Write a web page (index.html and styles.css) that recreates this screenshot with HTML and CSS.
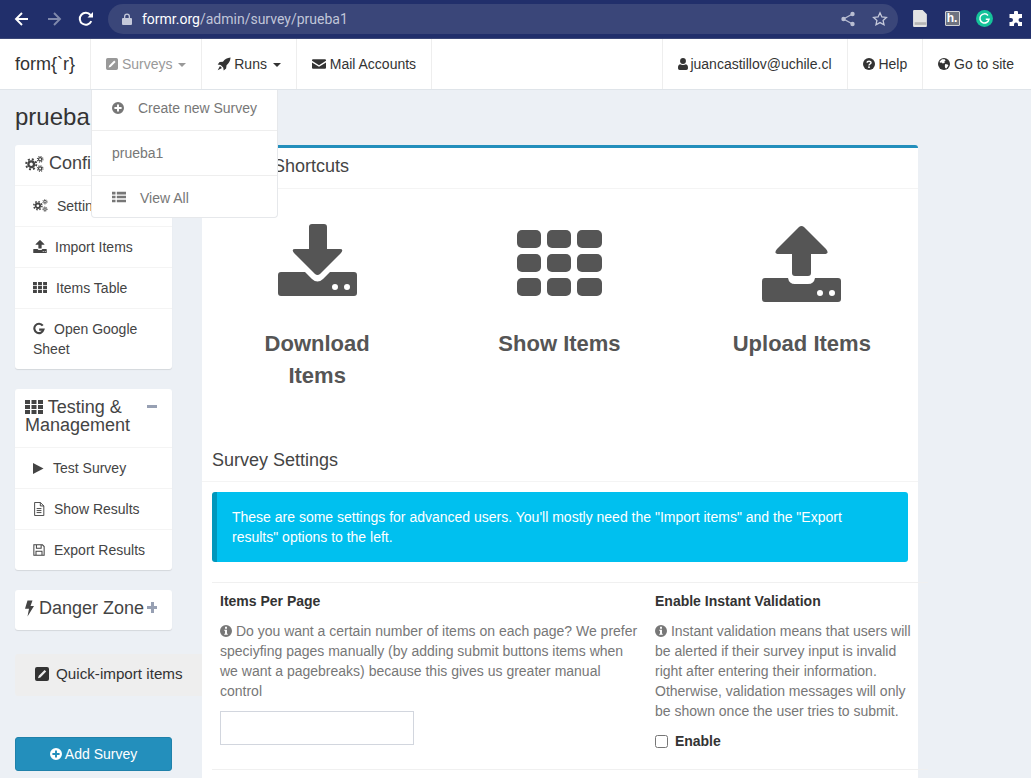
FILE: index.html
```html
<!DOCTYPE html>
<html lang="en">
<head>
<meta charset="utf-8">
<title>formr admin</title>
<link rel="stylesheet" href="styles.css">
</head>
<body>
<svg class="sprite" aria-hidden="true">
  <defs>
    <symbol id="i-edit" viewBox="1 1 14 14"><path fill-rule="evenodd" d="M3 1h10a2 2 0 0 1 2 2v10a2 2 0 0 1-2 2H3a2 2 0 0 1-2-2V3a2 2 0 0 1 2-2zM10.600 4 4.800 9.800 4 12.200l2.400-.8L12.200 5.600z"/></symbol>
    <symbol id="i-rocket" viewBox="0 0 16 16"><path d="M15.500.5C11.500.7 8.800 2.700 6.800 5.300L3 5.800.8 8.500l3.400.6 2.900 2.900.6 3.400 2.700-2.200.5-3.800C13.300 7.200 15.300 4.500 15.500.5zM3.400 10.300.8 15.200l4.900-2.600z"/></symbol>
    <symbol id="i-mail" viewBox="0 0 16 16"><path d="M1.200 2.500h13.600A1.200 1.200 0 0 1 16 3.700v.6L8 9.300 0 4.300v-.6a1.200 1.200 0 0 1 1.200-1.200zM0 6.200l8 5 8-5v6.100a1.200 1.200 0 0 1-1.200 1.200H1.200A1.200 1.200 0 0 1 0 12.300z"/></symbol>
    <symbol id="i-user" viewBox="0.500 0.400 13 15.100" preserveAspectRatio="none"><circle cx="7" cy="4.200" r="3.800"/><path d="M3.200 8.300C5 9.600 9 9.600 10.800 8.300 12.800 8.600 13.500 10.500 13.500 13c0 1.500-.8 2.500-2.200 2.500H2.700C1.300 15.500.5 14.500.5 13c0-2.500.7-4.400 2.700-4.700z"/></symbol>
    <symbol id="i-help" viewBox="0.500 0.500 15 15"><circle cx="8" cy="8" r="7.500"/><path d="M5.500 6.200C5.700 4 10.500 3.800 10.500 6.300 10.500 8 8 8 8 9.800" fill="none" stroke="#fff" stroke-width="1.800"/><rect x="7" y="11" width="2" height="2" fill="#fff"/></symbol>
    <symbol id="i-globe" viewBox="0.500 0.500 15 15"><circle cx="8" cy="8" r="7.500"/><path d="M5.500 2.200 8.800 2 10 3.500 8.500 5 9 6.500 6.500 7.500 5 6 3 6.500 2.500 5zM9.500 8l3 .5 1 1.500-2.500 3.500-1.500-.5-.5-2.500z" fill="#fff"/></symbol>
    <symbol id="i-plus-circle" viewBox="0.500 0.500 15 15"><path fill-rule="evenodd" d="M8 .5a7.500 7.500 0 1 0 0 15A7.500 7.500 0 0 0 8 .5zM6.800 3.500h2.400v3.300h3.300v2.400H9.200v3.300H6.800V9.200H3.500V6.800h3.300z"/></symbol>
    <symbol id="i-info" viewBox="0.500 0.500 15 15"><path fill-rule="evenodd" d="M8 .5a7.500 7.500 0 1 0 0 15A7.500 7.500 0 0 0 8 .5zM6.800 2.800h2.400v2.300H6.800zM5.800 6.300h3.400v5h1v1.500H5.800v-1.500h1V7.800h-1z"/></symbol>
    <symbol id="i-list" viewBox="0 0 16 14"><path d="M0 1h4v3H0zM5.500 1H16v3H5.500zM0 5.500h4v3H0zM5.500 5.500H16v3H5.500zM0 10h4v3H0zM5.500 10H16v3H5.500z"/></symbol>
    <symbol id="i-th" viewBox="0 0 18 14"><path d="M0 0h5v4H0zM6.500 0h5v4h-5zM13 0h5v4h-5zM0 5h5v4H0zM6.500 5h5v4h-5zM13 5h5v4h-5zM0 10h5v4H0zM6.500 10h5v4h-5zM13 10h5v4h-5z"/></symbol>
    <symbol id="i-cogs" viewBox="0 0 20 17">
      <g fill="none" stroke="currentColor">
        <circle cx="6.500" cy="8.800" r="3" stroke-width="2.400"/>
        <circle cx="6.500" cy="8.800" r="5.400" stroke-width="2" stroke-dasharray="2.100 2.140"/>
        <circle cx="16" cy="3.500" r="1.700" stroke-width="1.300"/>
        <circle cx="16" cy="3.500" r="3" stroke-width="1.100" stroke-dasharray="1.200 1.160"/>
        <circle cx="16" cy="13.300" r="1.700" stroke-width="1.300"/>
        <circle cx="16" cy="13.300" r="3" stroke-width="1.100" stroke-dasharray="1.200 1.160"/>
      </g>
    </symbol>
    <symbol id="i-g" viewBox="0 0 16 16"><path d="M13 3.600A6.200 6.200 0 1 0 14 8.800H8.200" fill="none" stroke="currentColor" stroke-width="2.800"/></symbol>
    <symbol id="i-play" viewBox="0 0 12 14"><path d="M0 1v12l11.500-6z"/></symbol>
    <symbol id="i-file" viewBox="0 0 13 16"><path d="M1.500.5h6.500l4 4v11h-10.500z M8 .5v4h4M3.800 7.500h5.500M3.800 9.800h5.500M3.800 12.100h5.500" fill="none" stroke="currentColor" stroke-width="1.100"/></symbol>
    <symbol id="i-save" viewBox="0 0 14 14"><path d="M1 1h10l2 2v10H1zM4 1v4h5.500V1M3.500 13V8.500h7V13" fill="none" stroke="currentColor" stroke-width="1.200"/></symbol>
    <symbol id="i-bolt" viewBox="0 0 9 16"><path d="M2.500 0h5L5.500 5.500H9L2.500 16l1.500-7.800H0z"/></symbol>
    <symbol id="i-upload" viewBox="0 0 79 76"><path fill-rule="evenodd" d="M37 1Q39.500-1 42 1L64 23Q68 28 62 28H49V47Q49 50 46 50H33Q30 50 30 47V28H17Q11 28 15 23zM3 52H26Q27 58 33 58H46Q52 58 53 52H76Q79 52 79 55V73Q79 76 76 76H3Q0 76 0 73V55Q0 52 3 52zM58 64a3 3 0 1 0 0 6 3 3 0 0 0 0-6zM70 64a3 3 0 1 0 0 6 3 3 0 0 0 0-6z"/></symbol>
    <symbol id="i-download" viewBox="0 0 79 72"><path fill-rule="evenodd" d="M34 0H46Q49 0 49 3V25H62Q66 25 63 29L42 50Q39.500 52 37 50L16 29Q13 25 17 25H31V3Q31 0 34 0zM3 48H27L34 55Q39.500 60 45 55L52 48H76Q79 48 79 51V69Q79 72 76 72H3Q0 72 0 69V51Q0 48 3 48zM57 60a3 3 0 1 0 0 6 3 3 0 0 0 0-6zM69 60a3 3 0 1 0 0 6 3 3 0 0 0 0-6z"/></symbol>
  </defs>
</svg>

<header class="browser">
  <span class="tool"><svg class="chrome-ico" viewBox="0 0 16 16"><path d="M14 8H2.500M8 2 2 8l6 6" fill="none" stroke="#fff" stroke-width="1.900"/></svg></span>
  <span class="tool"><svg class="chrome-ico" viewBox="0 0 16 16"><path d="M2 8h11.500M8 2l6 6-6 6" fill="none" stroke="#8089ac" stroke-width="1.900"/></svg></span>
  <span class="tool"><svg class="chrome-ico" viewBox="0 0 16 16"><path d="M13.300 10.200A6 6 0 1 1 12.500 4" fill="none" stroke="#fff" stroke-width="2"/><path d="M9.500 6.500H15V1z" fill="#fff"/></svg></span>
  <div class="omnibox">
    <svg class="lock" viewBox="0 0 10 12"><path d="M1 5h1V3.500a3 3 0 0 1 6 0V5h1a1 1 0 0 1 1 1v5a1 1 0 0 1-1 1H1a1 1 0 0 1-1-1V6a1 1 0 0 1 1-1zM3.300 5h3.400V3.500a1.700 1.700 0 0 0-3.400 0z" fill="#c5c9da"/></svg>
    <span class="url"><b class="host">formr.org</b>/admin/survey/prueba1</span>
    <span class="tool"><svg class="chrome-ico" viewBox="0 0 16 16"><path d="M12.500 3 3.500 8l9 5" fill="none" stroke="#b9bed2" stroke-width="1.300"/><circle cx="12.500" cy="3" r="2.200" fill="#b9bed2"/><circle cx="12.500" cy="13" r="2.200" fill="#b9bed2"/><circle cx="3.500" cy="8" r="2.200" fill="#b9bed2"/></svg></span>
    <span class="tool"><svg class="chrome-ico" viewBox="0 0 16 16"><path d="m8 1.800 1.900 4.100 4.500.5-3.300 3 .9 4.400L8 11.600l-4 2.200.9-4.400-3.300-3 4.500-.5z" fill="none" stroke="#c5c9da" stroke-width="1.300"/></svg></span>
  </div>
  <span class="tool"><svg class="chrome-ico ext" viewBox="0 0 14 16"><path d="M1 0h8l4 4v11a1 1 0 0 1-1 1H1a1 1 0 0 1-1-1V1a1 1 0 0 1 1-1z" fill="#e3e3e3"/><path d="M1.500 11.500h11V14h-11z" fill="#b5b5b5"/></svg></span>
  <span class="tool"><span class="ext-h">h.</span></span>
  <span class="tool"><svg class="chrome-ico ext-g" viewBox="0 0 16 16"><circle cx="8" cy="8" r="8" fill="#15c39a"/><path d="M11.300 5.200A4.300 4.300 0 1 0 12.200 8.800H9.200" fill="none" stroke="#fff" stroke-width="1.400"/></svg></span>
  <span class="tool"><svg class="chrome-ico" viewBox="0 0 16 16"><path d="M6 1.500a2 2 0 0 1 4 0V3h4v4h-1.500a2 2 0 0 0 0 4H14v4H10v-1.500a2 2 0 0 0-4 0V15H1.500v-4H3a2 2 0 0 0 0-4H1.500V3H6z" fill="#fff"/></svg></span>
</header>

<nav class="navbar">
  <a class="brand">form{`r}</a>
  <div class="nav-item open">
    <svg class="ico ico-12"><use href="#i-edit"/></svg> Surveys <span class="caret"></span>
    <ul class="dropdown">
      <li class="dd-first"><svg class="ico dd-ico"><use href="#i-plus-circle"/></svg>Create new Survey</li>
      <li class="dd-mid">prueba1</li>
      <li class="dd-last"><svg class="ico dd-ico-list"><use href="#i-list"/></svg>View All</li>
    </ul>
  </div>
  <div class="nav-item"><svg class="ico ico-rocket"><use href="#i-rocket"/></svg> Runs <span class="caret"></span></div>
  <div class="nav-item nav-last"><svg class="ico"><use href="#i-mail"/></svg> Mail Accounts</div>
  <div class="nav-right">
    <div class="nav-item"><svg class="ico ico-user"><use href="#i-user"/></svg> juancastillov@uchile.cl</div>
    <div class="nav-item"><svg class="ico ico-sm"><use href="#i-help"/></svg> Help</div>
    <div class="nav-item"><svg class="ico ico-sm"><use href="#i-globe"/></svg> Go to site</div>
  </div>
</nav>

<div class="page">
  <aside class="sidebar">
    <h1 class="page-title">prueba1</h1>

    <section class="card">
      <h3 class="card-head"><span class="card-title nowrap"><svg class="hico hico-cogs"><use href="#i-cogs"/></svg> Configuration</span></h3>
      <ul class="menu">
        <li><svg class="ico mico-cogs"><use href="#i-cogs"/></svg><span class="gap-10">Settings</span></li>
        <li><svg class="ico mico-14"><use href="#i-upload"/></svg><span class="gap-8">Import Items</span></li>
        <li><svg class="ico mico-14"><use href="#i-th"/></svg><span class="gap-9">Items Table</span></li>
        <li><svg class="ico mico-12"><use href="#i-g"/></svg><span class="gap-9">Open Google Sheet</span></li>
      </ul>
    </section>

    <section class="card">
      <h3 class="card-head"><span class="card-title"><svg class="hico hico-th"><use href="#i-th"/></svg> Testing &amp; Management</span><span class="box-tool minus"></span></h3>
      <ul class="menu">
        <li><svg class="ico mico-11"><use href="#i-play"/></svg><span class="gap-9">Test Survey</span></li>
        <li><svg class="ico mico-12"><use href="#i-file"/></svg><span class="gap-9">Show Results</span></li>
        <li><svg class="ico mico-12"><use href="#i-save"/></svg><span class="gap-9">Export Results</span></li>
      </ul>
    </section>

    <section class="card">
      <h3 class="card-head"><span class="card-title nowrap"><svg class="hico hico-bolt"><use href="#i-bolt"/></svg> Danger Zone</span><span class="box-tool plus"></span></h3>
    </section>

    <div class="quick"><svg class="ico quick-ico"><use href="#i-edit"/></svg>Quick-import items</div>
    <div class="add-btn"><svg class="ico ico-sm"><use href="#i-plus-circle"/></svg> Add Survey</div>
  </aside>

  <main class="main-box">
    <h3 class="section-head">Survey Shortcuts</h3>
    <div class="shortcuts">
      <a class="shortcut">
        <svg class="big-ico" viewBox="-3 0 85 80"><use href="#i-download" width="79" height="72"/></svg>
        <h3>Download Items</h3>
      </a>
      <a class="shortcut">
        <svg class="big-ico" viewBox="0 0 85 80">
          <rect x="0" y="6" width="24" height="18" rx="5"/><rect x="30" y="6" width="24" height="18" rx="5"/><rect x="60" y="6" width="25" height="18" rx="5"/>
          <rect x="0" y="30" width="24" height="18" rx="5"/><rect x="30" y="30" width="24" height="18" rx="5"/><rect x="60" y="30" width="25" height="18" rx="5"/>
          <rect x="0" y="54" width="24" height="18" rx="5"/><rect x="30" y="54" width="24" height="18" rx="5"/><rect x="60" y="54" width="25" height="18" rx="5"/>
        </svg>
        <h3>Show Items</h3>
      </a>
      <a class="shortcut">
        <svg class="big-ico" viewBox="-3 -2 85 80"><use href="#i-upload" width="79" height="76"/></svg>
        <h3>Upload Items</h3>
      </a>
    </div>

    <h3 class="section-head settings-head">Survey Settings</h3>
    <div class="alert">These are some settings for advanced users. You'll mostly need the "Import items" and the "Export results" options to the left.</div>

    <div class="form-row">
      <div class="field">
        <label class="field-label">Items Per Page</label>
        <p class="help"><svg class="ico ico-info"><use href="#i-info"/></svg> Do you want a certain number of items on each page? We prefer speciyfing pages manually (by adding submit buttons items when we want a pagebreaks) because this gives us greater manual control</p>
        <input class="text-input" type="text">
      </div>
      <div class="field field-right">
        <label class="field-label">Enable Instant Validation</label>
        <p class="help"><svg class="ico ico-info"><use href="#i-info"/></svg> Instant validation means that users will be alerted if their survey input is invalid right after entering their information. Otherwise, validation messages will only be shown once the user tries to submit.</p>
        <label class="check"><input type="checkbox"> Enable</label>
      </div>
    </div>
    <div class="form-row form-row-end"></div>
  </main>
</div>
</body>
</html>
```

FILE: styles.css
```css
* { box-sizing: border-box; }
html, body { margin: 0; padding: 0; height: 778px; overflow: hidden; }
body {
  background: #ecf0f5;
  font: 14px/20px "Liberation Sans", Arial, sans-serif;
  color: #333;
}
h1, h3, p, ul { margin: 0; padding: 0; font-weight: normal; }
ul { list-style: none; }
svg { fill: currentColor; }
.sprite { position: absolute; width: 0; height: 0; }

/* browser chrome */
.browser {
  display: flex;
  align-items: center;
  height: 39px;
  padding: 0 0 1px 6px;
  background: #212f6b;
  border-bottom: 1px solid #3b4777;
}
.tool {
  flex: none;
  width: 32px;
  height: 30px;
  display: flex;
  align-items: center;
  justify-content: center;
}
.chrome-ico { width: 16px; height: 16px; display: block; }
.ext { height: 17px; width: 15px; }
.ext-g { width: 17px; height: 17px; }
.ext-h {
  width: 15px;
  height: 15px;
  background: #6e7380;
  border: 1px solid #cfd1d6;
  border-radius: 1px;
  color: #fff;
  font: bold 12px/13px "Liberation Sans", sans-serif;
  text-align: center;
}
.omnibox {
  flex: none;
  width: 790px;
  height: 30px;
  margin: 0 6px;
  padding: 0 2px 0 14px;
  display: flex;
  align-items: center;
  border-radius: 15px;
  background: #3a4679;
  color: #c0c5d8;
}
.lock { width: 10px; height: 12px; flex: none; }
.url {
  flex: 1;
  margin-left: 10px;
  font: 14px/20px "Roboto", "Noto Sans", sans-serif;
}
.host { font-weight: normal; color: #fff; }

/* app navbar */
.navbar {
  display: flex;
  height: 51px;
  background: #fff;
  border-bottom: 1px solid #dfe4e9;
  color: #333;
}
.brand {
  width: 90px;
  padding: 14px 15px;
  font-size: 18px;
  line-height: 22px;
  color: #333;
}
.nav-item {
  position: relative;
  padding: 15px 15px 0;
  height: 50px;
  border-left: 1px solid #eee;
  white-space: nowrap;
}
.nav-last { border-right: 1px solid #eee; }
.nav-item.open { color: #999; }
.nav-right { margin-left: auto; padding-right: 2px; display: flex; }
.ico { width: 14px; height: 14px; display: inline-block; vertical-align: -2px; }
.ico-12 { width: 12px; height: 12px; vertical-align: -1px; }
.ico-rocket { width: 14px; height: 14px; margin-right: -1px; vertical-align: -2px; }
.ico-user { width: 10px; height: 12px; margin-right: -1px; vertical-align: -1px; }
.ico-sm { width: 12px; height: 12px; vertical-align: -1px; }
.caret {
  display: inline-block;
  width: 0;
  height: 0;
  margin-left: 2px;
  vertical-align: middle;
  border-top: 4px solid currentColor;
  border-left: 4px solid transparent;
  border-right: 4px solid transparent;
}
.dropdown {
  position: absolute;
  z-index: 5;
  top: 51px;
  left: 0;
  width: 187px;
  background: #fff;
  border: 1px solid #e6e8eb;
  border-top: 0;
  border-radius: 0 0 4px 4px;
  color: #777;
}
.dropdown li { padding-left: 20px; border-top: 1px solid #eee; }
.dropdown .dd-first { padding-top: 8px; padding-bottom: 12px; border-top: 0; }
.dropdown .dd-mid { padding-top: 12px; padding-bottom: 12px; }
.dropdown .dd-last { padding-top: 12px; padding-bottom: 9px; }
.dd-ico { width: 12px; height: 12px; margin-right: 14px; vertical-align: -1px; }
.dd-ico-list { margin-right: 14px; vertical-align: -1px; }

/* layout */
.page { display: flex; align-items: flex-start; }
.sidebar { flex: none; width: 202px; padding: 0 30px 0 15px; color: #444; }
.page-title {
  margin: 15px 0 16px;
  font-size: 24px;
  line-height: 24px;
  color: #333;
  white-space: nowrap;
}
.card {
  background: #fff;
  border-radius: 3px;
  box-shadow: 0 1px 1px rgba(0, 0, 0, .1);
  margin-bottom: 20px;
}
.card-head {
  display: flex;
  justify-content: space-between;
  align-items: flex-start;
  padding: 9px 15px 13px 10px;
  font-size: 18px;
  line-height: 18px;
  color: #444;
}
.card-title { min-width: 0; width: 118px; }
.nowrap { white-space: nowrap; }
.hico { display: inline-block; vertical-align: top; }
.hico-cogs { width: 19px; height: 16px; margin-top: 2px; }
.hico-th { width: 18px; height: 14px; margin-top: 2px; }
.hico-bolt { width: 9px; height: 17px; margin-top: 1px; }
.box-tool { position: relative; flex: none; width: 10px; height: 18px; }
.minus::before, .plus::before, .plus::after {
  content: "";
  position: absolute;
  background: #97a0b3;
}
.minus::before, .plus::before { left: 0; top: 7px; width: 10px; height: 3px; }
.plus::after { left: 3.500px; top: 3px; width: 3px; height: 11px; }
.menu li { padding: 10px 10px 10px 18px; border-top: 1px solid #f4f4f4; }
.mico-cogs { width: 15px; height: 13px; margin-right: -1px; vertical-align: -1px; }
.mico-14 { width: 14px; height: 13px; vertical-align: -1px; }
.mico-12 { width: 12px; height: 14px; vertical-align: -2px; }
.mico-11 { width: 11px; height: 13px; vertical-align: -2px; }
.gap-8 { margin-left: 8px; }
.gap-9 { margin-left: 9px; }
.gap-10 { margin-left: 10px; }
.quick {
  width: 187px;
  height: 42px;
  margin-top: 24px;
  padding: 10px 0 0 20px;
  background: #eee;
  font-size: 15.200px;
  line-height: 20px;
  color: #333;
  white-space: nowrap;
  border-radius: 3px 0 0 3px;
}
.quick-ico { margin-right: 7px; vertical-align: -2px; }
.add-btn {
  margin-top: 41px;
  height: 34px;
  padding-top: 6px;
  text-align: center;
  background: #238fbc;
  border: 1px solid #1f81aa;
  border-radius: 3px;
  color: #fff;
}

/* main */
.main-box {
  flex: none;
  width: 716px;
  height: 633px;
  margin-top: 55px;
  background: #fff;
  border-top: 3px solid #238fbc;
  border-radius: 3px 3px 0 0;
}
.section-head {
  padding: 8px 10px 12px;
  font-size: 18px;
  line-height: 20px;
  color: #444;
  border-bottom: 1px solid #f4f4f4;
}
.shortcuts { display: flex; margin: 0 -5px 0 -6px; padding-top: 35px; }
.shortcut { flex: 1 1 0; display: flex; flex-direction: column; align-items: center; color: #555; }
.big-ico { width: 85px; height: 80px; display: block; fill: #555; }
.shortcut h3 {
  width: 150px;
  margin-top: 24px;
  font-size: 22px;
  line-height: 32px;
  font-weight: bold;
  text-align: center;
}
.settings-head { margin-top: 58px; padding: 0 10px 11px; }
.alert {
  margin: 10px 10px 20px;
  padding: 15px 30px 15px 15px;
  background: #00c0ef;
  border-left: 5px solid #0097bc;
  border-radius: 3px;
  color: #fff;
}
.form-row {
  display: flex;
  gap: 15px;
  margin: 0 -10px 0 10px;
  padding: 8px 13px 18px 8px;
  border-top: 1px solid #f0f0f0;
}
.field { flex: none; width: 420px; }
.field-right { width: 260px; }
.field-label { display: block; font-weight: bold; color: #333; }
.help { margin: 10px 0; color: #777; }
.ico-info { width: 12px; height: 12px; vertical-align: -1px; }
.text-input {
  display: block;
  width: 194px;
  height: 34px;
  padding: 6px 12px;
  background: #fff;
  border: 1px solid #d2d6de;
  border-radius: 0;
}
.check { display: block; font-weight: bold; }
.check input { width: 13px; height: 13px; margin: 0 3px 0 0; vertical-align: -2px; }
.form-row-end { height: 9px; padding: 0; }
```
